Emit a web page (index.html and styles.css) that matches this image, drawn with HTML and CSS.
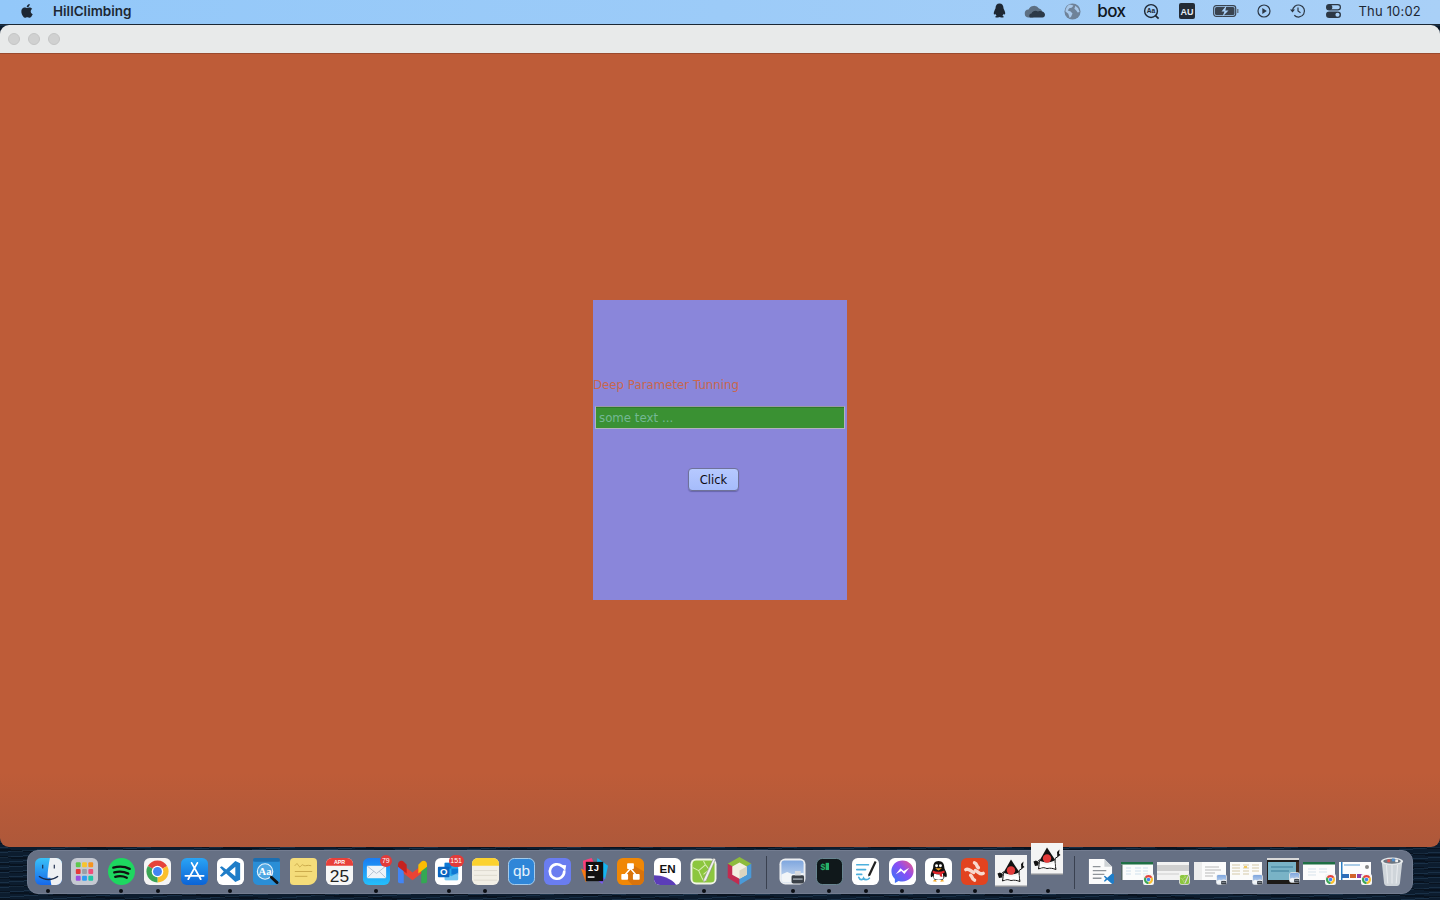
FILE: index.html
```html
<!DOCTYPE html>
<html lang="en">
<head>
<meta charset="utf-8">
<title>HillClimbing</title>
<link rel="stylesheet" href="styles.css">
</head>
<body>
<svg class="defs" width="0" height="0" aria-hidden="true">
  <defs>
    <linearGradient id="gBlue" x1="0" y1="0" x2="0" y2="1"><stop offset="0" stop-color="#2aa4f4"/><stop offset="1" stop-color="#0b63d6"/></linearGradient>
    <linearGradient id="gMail" x1="0" y1="0" x2="0" y2="1"><stop offset="0" stop-color="#1b7cf2"/><stop offset="1" stop-color="#25c0fb"/></linearGradient>
    <linearGradient id="gFinder" x1="0" y1="0" x2="0" y2="1"><stop offset="0" stop-color="#39c2f8"/><stop offset="1" stop-color="#1768ea"/></linearGradient>
    <linearGradient id="gMsg" x1="0" y1="1" x2="1" y2="0"><stop offset="0" stop-color="#2b7cf6"/><stop offset=".55" stop-color="#8a4df5"/><stop offset="1" stop-color="#f4587e"/></linearGradient>
    <linearGradient id="gSky" x1="0" y1="0" x2="0" y2="1"><stop offset="0" stop-color="#7fa6de"/><stop offset="1" stop-color="#cfdff2"/></linearGradient>
    <symbol id="chrome" viewBox="0 0 28 28">
      <path fill="#e5433a" d="M14 14L4 8.300A11.500 11.500 0 0 1 24 8.300Z"/>
      <path fill="#fbc02d" d="M14 14L24 8.300A11.500 11.500 0 0 1 14 25.500Z"/>
      <path fill="#3aa655" d="M14 14L14 25.500A11.500 11.500 0 0 1 4 8.300Z"/>
      <circle cx="14" cy="14" r="6" fill="#fff"/><circle cx="14" cy="14" r="4.600" fill="#4285f4"/>
    </symbol>
    <symbol id="preview" viewBox="0 0 28 28">
      <rect x=".5" y=".5" width="27" height="27" rx="6" fill="#eceef1"/>
      <rect x="2.500" y="2.500" width="23" height="23" rx="3" fill="url(#gSky)"/>
      <path fill="#f2f5f8" d="M2.500 17l6-2.500 5 2 12-1v6.500a3 3 0 0 1-3 3h-17a3 3 0 0 1-3-3z"/>
      <path fill="#3a4048" d="M13 19.500q0-1.500 2-1.500h9q2 0 2 1.500V25q0 1.500-2 1.500h-9q-2 0-2-1.500z"/>
      <path fill="#d8dbdf" d="M16.500 13.500h6v4.500h-6z"/>
      <path fill="#8f979f" d="M14.500 21h10v1.800h-10z"/>
    </symbol>
    <symbol id="texpen" viewBox="0 0 28 28">
      <rect x=".5" y=".5" width="27" height="27" rx="6" fill="#f1f5e6"/>
      <rect x="2.500" y="2.500" width="23" height="23" rx="4" fill="#8cc63f"/>
      <path stroke="#d7ecb0" stroke-width="1.100" fill="none" d="M3 10l6 3 3 7 3 5M9 13l7-6 4 5-6 5M16 7l-2-4"/>
      <path fill="#f0f0f0" stroke="#777" stroke-width=".5" d="M24.500 0l2 1.300L17 23l-2.500 2-.3-3.100z"/>
    </symbol>
    <symbol id="duke" viewBox="0 0 32 32">
      <rect width="32" height="32" fill="#f4f4f4"/>
      <rect y="30.500" width="32" height="1.500" fill="#8d9096"/>
      <path fill="none" stroke="#111" stroke-width="1" d="M8.500 16.500C6 19 6 21 3.500 19.500M24 15.500l3-2 .5-4M9 17c-1 3-1 6-1.500 9 4-2 6-1.500 8.500-.5 3-1 6 0 9 1-1-4-1-8-.8-11"/>
      <path fill="#111" d="M16 4.500L24.200 17c-4 3-12 3-15.600.500z"/>
      <path fill="#111" d="M2.500 18.500l2.500-1 3 2-1 3-3 .5zM26 9l2.500-2.500-.5 4 1.500 1.500-3 2z"/>
      <circle cx="16" cy="15.500" r="4.200" fill="#e33b3b"/>
      <path fill="#fff" d="M9.500 20c4 2.500 10 2.500 14-.5l.5 5.500c-3-.8-5.500-1.200-8-.2-2.500-1-4.500-1-7 .2z"/>
    </symbol>
  </defs>
</svg>

<div class="screen">
  <header class="menubar">
    <div class="menu-left">
      <svg class="apple" viewBox="0 0 14 16" width="14" height="16"><path fill="#1d2733" d="M10.700 8.500c0-1.800 1.500-2.600 1.500-2.700-.8-1.200-2.100-1.400-2.500-1.400-1.100-.1-2.100.6-2.600.6s-1.400-.6-2.300-.6c-1.200 0-2.300.7-2.900 1.700-1.200 2.100-.3 5.300.9 7 .6.800 1.300 1.800 2.200 1.700.9 0 1.200-.6 2.300-.6s1.400.6 2.300.6 1.600-.8 2.100-1.700c.7-1 1-1.900 1-2-.1 0-2-.7-2-2.600zM9 3.300c.5-.6.800-1.400.7-2.300-.7 0-1.600.5-2.100 1.100-.5.500-.9 1.400-.8 2.200.8.100 1.700-.4 2.200-1z"/></svg>
      <span class="app-name">HillClimbing</span>
    </div>
    <div class="menu-right">
      <div class="status-icons">
        <span class="cell"><svg viewBox="0 0 16 18" width="15" height="18"><path fill="#1d2733" d="M8 1c2.800 0 4.200 2.200 4.200 4.600 0 1.100.6 1.800 1.200 3 .8 1.700 1 3.600.2 4-.4.200-.9-.3-1.200-.8-.2 1-.7 1.700-1.400 2.300 1 .4 1.600.8 1.500 1.300-.1.500-1.700.6-3 .5-1 0-1.400-.4-1.500-.4s-.5.400-1.500.4c-1.300.1-2.900 0-3-.5-.1-.5.500-.9 1.500-1.300-.7-.6-1.200-1.300-1.400-2.300-.3.500-.8 1-1.200.8-.8-.4-.6-2.300.2-4 .6-1.200 1.200-1.900 1.200-3C3.800 3.200 5.200 1 8 1z"/></svg></span>
        <span class="cell"><svg viewBox="0 0 22 13" width="22" height="13"><path fill="#5d6f82" d="M5 12.500a4 4 0 0 1-.5-8A6 6 0 0 1 15 3.500a4.500 4.500 0 0 1 3 2.200L9 12.500z"/><path fill="#2c3947" d="M6 12.500c-1.500-1.500-.5-4 1.500-4 1-2.500 4-3.500 6.500-2 3-1.500 7 .5 7 3.300 0 1.500-1 2.700-2.500 2.700z"/></svg></span>
        <span class="cell"><svg viewBox="0 0 18 18" width="17" height="17"><circle cx="9" cy="9" r="8.500" fill="#6f8298"/><path fill="#a8c8ea" d="M6 1.500c1.500.5 3 .5 4 1.500L8 5 5.500 5.500 4 8l3 1 2 2-1.500 3.500L6 16 4.500 11.500 1.500 9C1.500 5.500 3.500 2.500 6 1.500zM12 3l3 2.500 1.500 4-2 .5-1.500-2L11 6z"/></svg></span>
        <span class="cell"><span class="box-text">box</span></span>
        <span class="cell"><svg viewBox="0 0 18 18" width="17" height="17"><circle cx="8.500" cy="8.500" r="6.800" fill="none" stroke="#1d2733" stroke-width="1.500"/><path stroke="#1d2733" stroke-width="1.800" d="M13 13l3.500 3.500"/><text class="aa-text" x="8.500" y="11" text-anchor="middle">Aa</text></svg></span>
        <span class="cell"><svg viewBox="0 0 16 16" width="16" height="16"><rect width="16" height="16" rx="2" fill="#222b36"/><text class="au-text" x="8" y="11.500" text-anchor="middle">AU</text></svg></span>
        <span class="cell"><svg viewBox="0 0 26 12" width="26" height="12"><rect x=".7" y=".7" width="22" height="10.600" rx="2.500" fill="none" stroke="#39434f" stroke-width="1.200"/><rect x="2" y="2" width="19.500" height="8" rx="1.500" fill="#39434f"/><rect x="24" y="4" width="1.500" height="4" fill="#6e7c8c"/><path fill="#a9d0f7" d="M13.500 .5l-5 6h3L9.500 11.500l6-6h-3.200z"/></svg></span>
        <span class="cell"><svg viewBox="0 0 14 14" width="14" height="14"><circle cx="7" cy="7" r="6" fill="none" stroke="#2c3744" stroke-width="1.200"/><path fill="#2c3744" d="M5.300 4l4.500 3-4.500 3z"/></svg></span>
        <span class="cell"><svg viewBox="0 0 16 16" width="16" height="16"><path fill="none" stroke="#2c3744" stroke-width="1.200" d="M2.500 8a6 6 0 1 1 1.800 4.300M8 4.500V8l2.500 1.800"/><path fill="#2c3744" d="M0 6.500h5L2.500 9.500z"/></svg></span>
        <span class="cell"><svg viewBox="0 0 15 14" width="15" height="14"><rect x=".6" y=".6" width="13.800" height="5.300" rx="2.650" fill="none" stroke="#2c3744" stroke-width="1.200"/><circle cx="3.600" cy="3.250" r="2.700" fill="#2c3744"/><rect y="7.500" width="15" height="6.500" rx="3.250" fill="#2c3744"/><circle cx="11.500" cy="10.750" r="2.100" fill="#a9d0f7"/></svg></span>
      </div>
      <span class="clock">Thu 10:02</span>
    </div>
  </header>

  <main class="window">
    <div class="titlebar">
      <span class="light"></span><span class="light"></span><span class="light"></span>
    </div>
    <div class="content">
      <section class="panel">
        <div class="panel-title">Deep Parameter Tunning</div>
        <div class="field">some text ...</div>
        <div class="button-row"><button class="click-button" type="button">Click</button></div>
      </section>
    </div>
  </main>

  <footer class="desk">
    <nav class="dock">
      <div class="item on"><svg viewBox="0 0 28 28"><rect width="28" height="28" rx="6" fill="url(#gFinder)"/><path fill="#eef0f3" d="M15.500 0H22a6 6 0 0 1 6 6v16a6 6 0 0 1-6 6h-5c-.6-3-1-5.500-1-7.500h-3c0-6 1-13 2.500-20.500z"/><path fill="none" stroke="#1b2b4a" stroke-width="1.200" d="M8 7v4M20 7v4M4 19c6 4.500 14 4.500 20 0"/></svg></div>
      <div class="item"><svg viewBox="0 0 28 28"><rect width="28" height="28" rx="6" fill="#c5c9d2"/><g><rect x="5" y="4.500" width="5" height="5" rx="1" fill="#5fc84d"/><rect x="11.500" y="4.500" width="5" height="5" rx="1" fill="#f8c42d"/><rect x="18" y="4.500" width="5" height="5" rx="1" fill="#f59420"/><rect x="5" y="11.500" width="5" height="5" rx="1" fill="#e43a3a"/><rect x="11.500" y="11.500" width="5" height="5" rx="1" fill="#9aa0a6"/><rect x="18" y="11.500" width="5" height="5" rx="1" fill="#ef4f7a"/><rect x="5" y="18.500" width="5" height="5" rx="1" fill="#9a4fe0"/><rect x="11.500" y="18.500" width="5" height="5" rx="1" fill="#2e9cf2"/><rect x="18" y="18.500" width="5" height="5" rx="1" fill="#1fc9a5"/></g></svg></div>
      <div class="item on"><svg viewBox="0 0 28 28"><circle cx="14" cy="14" r="14" fill="#1ed760"/><path fill="none" stroke="#111" stroke-linecap="round" stroke-width="2.400" d="M5.500 10c6-1.800 12-1.300 17 1.300M6.500 15c5-1.400 10-1 14.500 1.200M7.500 19.500c4-1 8.500-.8 12 1"/></svg></div>
      <div class="item on"><svg viewBox="0 0 28 28"><rect width="28" height="28" rx="6" fill="#f4f4f4"/><use href="#chrome" width="28" height="28"/></svg></div>
      <div class="item"><svg viewBox="0 0 28 28"><rect width="28" height="28" rx="6" fill="url(#gBlue)"/><path fill="none" stroke="#fff" stroke-linecap="round" stroke-width="1.800" d="M11 5l9.500 17M17 5L7.500 22M4.500 18.500h19"/></svg></div>
      <div class="item on"><svg viewBox="0 0 28 28"><rect width="28" height="28" rx="6" fill="#fff"/><path fill="#1f7dc8" d="M19 3l5 2.500v17L19 25 9.500 16l-4.500 3.500-2-1.200 4-4.300-4-4.300 2-1.200L9.500 12zM19 9l-6 5 6 5z"/></svg></div>
      <div class="item"><svg viewBox="0 0 28 28"><rect width="28" height="28" rx="5" fill="#2a8ed6"/><rect width="28" height="4" rx="2" fill="#1c6eb0"/><circle cx="12.500" cy="14" r="8" fill="#4ea6e2" stroke="#e2f1fb" stroke-width="1.200"/><text class="dict-text" x="12.500" y="18" text-anchor="middle">Aa</text><path stroke="#111" stroke-width="3" stroke-linecap="round" d="M19 20l6 5.500"/></svg></div>
      <div class="item"><svg viewBox="0 0 28 28"><path fill="#f4dc7a" d="M4 0h20a4 4 0 0 1 4 4v15c0 5-4 9-9 9H4a4 4 0 0 1-4-4V4a4 4 0 0 1 4-4z"/><path fill="none" stroke="#c9a94a" stroke-width="1" d="M5 8c2-3 3-2 4 0s2 1 3-.5 2 1 4 .5 4-.5 6 0M5 14h18M5 19h13"/></svg></div>
      <div class="item"><svg viewBox="0 0 28 28"><rect width="28" height="28" rx="6" fill="#f6f6f6"/><path fill="#e8403a" d="M0 8V6a6 6 0 0 1 6-6h16a6 6 0 0 1 6 6v2z"/><text class="apr-text" x="14" y="6.500" text-anchor="middle">APR</text><text class="cal-text" x="14" y="25" text-anchor="middle">25</text></svg></div>
      <div class="item on"><svg viewBox="0 0 28 28"><rect width="28" height="28" rx="6" fill="url(#gMail)"/><rect x="4" y="8" width="20" height="13" rx="1" fill="#eef3f8"/><path fill="none" stroke="#b4c2d0" stroke-width="1" d="M4.500 8.500L14 16l9.500-7.500M4.500 20.500l7-7M23.500 20.500l-7-7"/></svg><span class="badge">79</span></div>
      <div class="item"><svg viewBox="0 0 32 28" class="wide"><path fill="#4285f4" d="M1 8h6v18H3a2 2 0 0 1-2-2z"/><path fill="#34a853" d="M25 8h6v16a2 2 0 0 1-2 2h-4z"/><path fill="#ea4335" d="M7 8v8l9 7 9-7V8l-9 7z"/><path fill="#c5221f" d="M1 7c0-4 4-5 6-3l3 3v9L1 9z"/><path fill="#fbbc04" d="M31 7c0-4-4-5-6-3l-3 3v9l9-7z"/></svg></div>
      <div class="item on"><svg viewBox="0 0 28 28"><rect width="28" height="28" rx="6" fill="#fff"/><rect x="10" y="5" width="14" height="18" rx="1" fill="#28a8ea"/><rect x="10" y="5" width="7" height="6" fill="#0f78d4"/><rect x="17" y="11" width="7" height="6" fill="#0f78d4"/><path fill="#fff" opacity=".35" d="M10 15l7 4 7-4v8H10z"/><rect x="3" y="9" width="12" height="11" rx="1" fill="#0a64c0"/><text class="ol-text" x="9" y="18" text-anchor="middle">O</text></svg><span class="badge badge-wide">151</span></div>
      <div class="item on"><svg viewBox="0 0 28 28"><rect width="28" height="28" rx="6" fill="#f2efe6"/><path fill="#fcd22e" d="M0 8V6a6 6 0 0 1 6-6h16a6 6 0 0 1 6 6v2z"/><path stroke="#d8d4c8" stroke-width=".8" d="M2 13h24M2 18h24M2 23h24"/></svg></div>
      <div class="item"><svg viewBox="0 0 28 28"><rect x=".5" y=".5" width="27" height="27" rx="6" fill="#2f86d8" stroke="#a9d0f0"/><text class="qb-text" x="14" y="19" text-anchor="middle">qb</text></svg></div>
      <div class="item"><svg viewBox="0 0 28 28"><rect width="28" height="28" rx="6" fill="#6a7df0"/><path fill="none" stroke="#fff" stroke-width="2.800" stroke-linecap="round" d="M21 14a7.500 7.500 0 1 1-2.500-5.600"/><path fill="#fff" d="M16 7l7 .5-1 6z"/></svg></div>
      <div class="item"><svg viewBox="0 0 30 30" class="wide"><path fill="#fc3f7a" d="M3 4l9-3 4 8-12 7z"/><path fill="#f97a12" d="M1 12l5 14 7-8z"/><path fill="#15b4f0" d="M18 1l11 8-3 14-10-4z"/><path fill="#7b5cf0" d="M18 24l8-3-3 7z"/><rect x="6" y="5" width="18" height="20" fill="#111"/><text class="ij-text" x="8" y="14.500">IJ</text><rect x="8" y="20" width="7" height="1.500" fill="#fff"/></svg></div>
      <div class="item"><svg viewBox="0 0 28 28"><rect width="28" height="28" rx="6" fill="#f08705"/><path fill="#d9730a" d="M28 14v8a6 6 0 0 1-6 6h-6L8 20l6-14z"/><path fill="none" stroke="#fff" stroke-width="1.600" d="M14 11l-6 7M14 11l6 7"/><rect x="10.500" y="5.500" width="7" height="6" rx=".8" fill="#fff"/><rect x="4.500" y="16.500" width="7" height="6" rx=".8" fill="#fff"/><rect x="16.500" y="16.500" width="7" height="6" rx=".8" fill="#fff"/></svg></div>
      <div class="item"><svg viewBox="0 0 28 28"><rect width="28" height="28" rx="6" fill="#fff"/><path fill="#5b3db8" d="M0 18c8 0 18 3 23 10H6a6 6 0 0 1-6-6z"/><text class="en-text" x="14" y="15.500" text-anchor="middle">EN</text></svg></div>
      <div class="item on"><svg viewBox="0 0 28 28"><use href="#texpen" width="28" height="28"/></svg></div>
      <div class="item"><svg viewBox="0 0 30 32" class="wide"><path fill="#8dbb3c" d="M15 0L2 7.500l13 7.500 13-7.500z"/><path fill="#c22b4f" d="M2 7.500V23l13 8V15z"/><path fill="#4a9ad8" d="M28 7.500V23l-13 8V15z"/><path fill="#f3efe0" d="M15 6l8 4.500v9L15 24l-8-4.500v-9z"/><path fill="#d9d4bf" d="M15 15l8-4.500v9L15 24z"/></svg></div>
      <div class="sep"></div>
      <div class="item on"><svg viewBox="0 0 28 28"><use href="#preview" width="28" height="28"/></svg></div>
      <div class="item on"><svg viewBox="0 0 28 28"><rect x=".5" y=".5" width="27" height="27" rx="6" fill="#10181b" stroke="#6b8a95"/><text class="term-text" x="4.500" y="12">$</text><rect x="10" y="5" width="3.500" height="7.500" fill="#26b36b"/></svg></div>
      <div class="item on"><svg viewBox="0 0 28 28"><rect width="28" height="28" rx="6" fill="#fff"/><path fill="none" stroke="#4db0dd" stroke-width="1.800" stroke-linecap="round" d="M5 7h12M5 12h9M5 17h5M7 20c1 3 4 3 5 1 1 2 4 2 6 0"/><path fill="#222" d="M23.500 3l2 1.200-6.500 14-2.200 1 .2-2.400z"/></svg></div>
      <div class="item on"><svg viewBox="0 0 28 28"><rect width="28" height="28" rx="6" fill="#fff"/><path fill="url(#gMsg)" d="M14 2.500C7.400 2.500 2.500 7.400 2.500 13.600c0 3.300 1.400 6.200 3.600 8.200V26l3.900-2.200c1.300.4 2.600.6 4 .6 6.600 0 11.500-4.900 11.500-10.800S20.600 2.500 14 2.500z"/><path fill="#fff" d="M7 16.800l4.900-6.300 3.300 2.900 5.800-3.200-5 6.400-3.200-3z"/></svg></div>
      <div class="item on"><svg viewBox="0 0 28 28"><rect width="28" height="28" rx="6" fill="#fff"/><path fill="#111" d="M14 3c4 0 6 3 6 6.500 0 2 2 4 2.500 7 .4 3-.5 4-1.500 3l-.5-1c-.3 2-1 3-2 4H10c-1-1-1.700-2-2-4l-.5 1c-1 1-1.900 0-1.500-3 .5-3 2.500-5 2.500-7C8.500 6 10 3 14 3z"/><path fill="#fff" d="M9.500 16c3 1.500 6 1.500 9 0l.7 5c-3 2-7 2-10.400 0z"/><circle cx="12" cy="8" r="1.500" fill="#fff"/><circle cx="16" cy="8" r="1.500" fill="#fff"/><path fill="#f5a623" d="M10.500 10.500h7L14 13z"/><path fill="#e0242a" d="M8 13c4 1.800 8 1.800 12 0l.5 2c-1 .7-2 1-3 1.300l.5 3.500-2.500-1-.5-2.200c-2.500.3-4.500 0-7-1.100z"/><path fill="#f5a623" d="M8 24c2-2 4-1 4 .5zM20 24c-2-2-4-1-4 .5z"/></svg></div>
      <div class="item on"><svg viewBox="0 0 28 28"><rect width="28" height="28" rx="6" fill="#e2431f"/><path fill="none" stroke="#f8d9cd" stroke-width="3.600" stroke-linecap="round" d="M5 12c3-2 5 2 8 3M23 16c-3 2-5-2-8-3M14 5c3 1 2 4 4 5M14 23c-3-1-2-4-4-5"/></svg></div>
      <div class="item on"><svg class="duke-tile" viewBox="0 0 32 32"><use href="#duke" width="32" height="32"/></svg></div>
      <div class="item on"><svg class="duke-tile bounced" viewBox="0 0 32 32"><use href="#duke" width="32" height="32"/></svg></div>
      <div class="sep"></div>
      <div class="item"><svg viewBox="0 0 28 28"><path fill="#fbfbfb" d="M2 1h16l8 8v18H2z"/><path fill="#cfd3d6" d="M18 1l8 8h-8z"/><path stroke="#8f9499" stroke-width="1.300" d="M6 9h8M6 13h14M6 17h12M6 21h9"/><path fill="#1f7dc8" d="M26 16l2 1v9l-2 1-5-4.500-2.500 2-1-.7 2-2.300-2-2.300 1-.7 2.500 2z"/></svg></div>
      <div class="item"><div class="thumb"><svg viewBox="0 0 32 18" preserveAspectRatio="none"><rect width="32" height="18" fill="#fbfcfb"/><rect width="32" height="2.500" fill="#1e6f43"/><path stroke="#cfe0ec" stroke-width="1" d="M5 6h5M5 9h5M5 12h5M14 6h6M14 9h6M14 12h6M22 6h5M22 9h5M22 12h5"/><rect y="2.500" width="1.500" height="15.500" fill="#566"/></svg><svg class="mini" viewBox="0 0 28 28"><rect width="28" height="28" rx="5" fill="#f4f4f4"/><use href="#chrome" width="28" height="28"/></svg></div></div>
      <div class="item"><div class="thumb"><svg viewBox="0 0 32 18" preserveAspectRatio="none"><rect width="32" height="18" fill="#f2f2f2"/><rect y="3" width="32" height="6" fill="#cfcfcf"/><rect y="11" width="22" height="2" fill="#e0e0e0"/></svg><svg class="mini" viewBox="0 0 28 28"><use href="#texpen" width="28" height="28"/></svg></div></div>
      <div class="item"><div class="thumb"><svg viewBox="0 0 32 18" preserveAspectRatio="none"><rect width="32" height="18" fill="#fbfbfb"/><rect width="8" height="18" fill="#ececec"/><path stroke="#aaa" stroke-width=".8" d="M11 5h14M11 8h16M11 11h10M11 14h8"/></svg><svg class="mini" viewBox="0 0 28 28"><use href="#preview" width="28" height="28"/></svg></div></div>
      <div class="item"><div class="thumb"><svg viewBox="0 0 32 18" preserveAspectRatio="none"><rect width="32" height="18" fill="#fbfbfa"/><path stroke="#d5c9a8" stroke-width="1" d="M2 3h8M2 6h8M2 9h8M2 12h8M13 3h6M13 6h6M13 9h6M13 12h6M22 3h7M22 6h7M22 9h7"/><rect x="14" y="4" width="3" height="2" fill="#f3c95f"/></svg><svg class="mini" viewBox="0 0 28 28"><use href="#preview" width="28" height="28"/></svg></div></div>
      <div class="item"><div class="thumb thumb-tall"><svg viewBox="0 0 32 26" preserveAspectRatio="none"><rect width="32" height="26" fill="#1d1a17"/><rect width="32" height="2" fill="#d9d9d9"/><rect x="1" y="4" width="28" height="18" fill="#79b3c6"/><path stroke="#3f7f99" stroke-width="1" d="M4 9h22M4 13h18"/><rect x="29" y="4" width="3" height="18" fill="#3a2a20"/></svg><svg class="mini" viewBox="0 0 28 28"><use href="#preview" width="28" height="28"/></svg></div></div>
      <div class="item"><div class="thumb"><svg viewBox="0 0 32 18" preserveAspectRatio="none"><rect width="32" height="18" fill="#fcfcfc"/><rect width="32" height="2.500" fill="#1e6f43"/><path stroke="#d7e3ec" stroke-width="1" d="M5 7h8M5 10h8M5 13h8M16 7h8M16 10h8"/></svg><svg class="mini" viewBox="0 0 28 28"><rect width="28" height="28" rx="5" fill="#f4f4f4"/><use href="#chrome" width="28" height="28"/></svg></div></div>
      <div class="item"><div class="thumb"><svg viewBox="0 0 32 18" preserveAspectRatio="none"><rect width="32" height="18" fill="#fcfcfc"/><rect x="2" width="1.500" height="18" fill="#2b7fc4"/><path stroke="#5a9bd0" stroke-width="1" d="M5 3h16"/><rect x="3" y="12" width="7" height="4" fill="#2e6db8"/><rect x="11" y="12" width="6" height="4" fill="#d2642c"/><rect x="18" y="12" width="6" height="4" fill="#8e3fa8"/><circle cx="28" cy="5" r="2" fill="#888"/></svg><svg class="mini" viewBox="0 0 28 28"><rect width="28" height="28" rx="5" fill="#f4f4f4"/><use href="#chrome" width="28" height="28"/></svg></div></div>
      <div class="item"><svg class="trash" viewBox="0 0 28 32"><path fill="#cfd5da" d="M3 6h22l-2.500 23a3 3 0 0 1-3 2.500h-11a3 3 0 0 1-3-2.500z"/><path fill="none" stroke="#eef1f3" stroke-width=".9" d="M8 9l1.500 20M14 9v20M20 9l-1.500 20"/><ellipse cx="14" cy="5" rx="12" ry="4" fill="#e7eaec"/><ellipse cx="14" cy="5" rx="9.500" ry="2.600" fill="#6c7680"/><path fill="#d9534f" d="M9 3h3v3H9z"/><path fill="#4f8fd0" d="M14 2h3v3h-3z"/><path fill="#f1f1f1" d="M17.500 3h3v3h-3z"/></svg></div>
    </nav>
  </footer>
</div>
</body>
</html>
```

FILE: styles.css
```css
* { box-sizing: border-box; }

html, body {
  margin: 0;
  padding: 0;
  width: 1440px;
  height: 900px;
  overflow: hidden;
}

.defs { display: block; height: 0; width: 0; }

.screen {
  width: 1440px;
  height: 900px;
  display: flex;
  flex-direction: column;
  overflow: hidden;
  background-color: #0c1c2e;
  background-image:
    repeating-linear-gradient(176deg, rgba(60, 100, 135, .28) 0 1px, transparent 1px 5px),
    repeating-linear-gradient(3deg, rgba(5, 12, 22, .6) 0 2px, transparent 2px 7px);
}

/* Menu bar */
.menubar {
  flex: none;
  height: 25px;
  display: flex;
  justify-content: space-between;
  align-items: center;
  padding: 0 19px 2px 20px;
  background: linear-gradient(90deg, #93c8f9 0%, #9ccbf8 50%, #a9d0f7 100%);
  border-bottom: 1px solid #1b2835;
  font-family: Inter, "Liberation Sans", sans-serif;
  font-size: 13px;
  color: #1d2733;
}

.menu-left { display: flex; align-items: center; gap: 19px; }
.apple { display: block; }
.app-name { font-weight: 600; font-size: 13.500px; }

.menu-right { display: flex; align-items: center; gap: 9px; }
.status-icons {
  display: grid;
  grid-template-columns: 36px 36px 38px 40px 40px 32px 46px 30px 38px 32px;
  align-items: center;
  justify-items: center;
}
.cell { display: flex; align-items: center; justify-content: center; height: 20px; }
.cell svg { display: block; }
.clock { letter-spacing: .2px; }

.box-text {
  padding-top: 1px;
  font-weight: 500;
  font-size: 17px;
  line-height: 19px;
  letter-spacing: -.6px;
  color: #10161d;
}
.aa-text { font: 700 7px "Liberation Sans", sans-serif; fill: #1d2733; }
.au-text { font: 700 9px "Liberation Sans", sans-serif; fill: #e6edf4; }

/* Window */
.window {
  flex: none;
  height: 822px;
  display: flex;
  flex-direction: column;
  border-radius: 9px;
  overflow: hidden;
}

.titlebar {
  flex: none;
  height: 28px;
  display: flex;
  align-items: center;
  gap: 8px;
  padding-left: 8px;
  background: #e8eaea;
}

.light {
  width: 12px;
  height: 12px;
  border-radius: 50%;
  background: #d0d1d1;
  border: 1px solid #c4c5c5;
}

.content {
  flex: 1;
  display: flex;
  align-items: center;
  justify-content: center;
  background: linear-gradient(180deg, #be5c38 0, #be5c38 720px, #ae583a 100%);
  box-shadow: inset 0 1px 0 #9a4a2e;
}

.panel {
  width: 254px;
  height: 300px;
  background: #8a86da;
  padding-top: 78px;
  display: flex;
  flex-direction: column;
  font-family: "DejaVu Sans", sans-serif;
  font-size: 11.800px;
}

.panel-title {
  height: 14px;
  line-height: 14px;
  color: #c9664e;
  white-space: nowrap;
}

.field {
  margin: 14px 2px 0;
  height: 23px;
  line-height: 22px;
  padding-left: 3px;
  background: #3a9133;
  border: 1px solid #b3b3bd;
  border-top-color: #9a9aa6;
  box-shadow: inset 0 1px 0 #2f7a2b;
  color: #74b894;
  white-space: nowrap;
}

.button-row { margin: 39px 0 0 95px; }

.click-button {
  display: block;
  width: 51px;
  height: 23px;
  padding: 0;
  border: 1px solid #6f7299;
  border-radius: 4px;
  background: linear-gradient(180deg, #b6c9ff 0%, #a6bcfb 100%);
  box-shadow: 0 1px 1px rgba(40, 40, 90, .35);
  color: #0b0b12;
  font-family: "DejaVu Sans", sans-serif;
  font-size: 11.500px;
}

/* Dock */
.desk {
  flex: none;
  height: 53px;
  padding: 3px 27px 0;
}

.dock {
  width: 1386px;
  height: 44px;
  display: flex;
  align-items: center;
  padding-left: 2.300px;
  background: #667084;
  border: 1px solid #737c90;
  border-radius: 11px;
}

.item {
  position: relative;
  flex: none;
  width: 36.400px;
  height: 44px;
  padding-bottom: 2px;
  display: flex;
  align-items: center;
  justify-content: center;
}

.item > svg { display: block; width: 27px; height: 27px; }
.item > svg.wide { width: 31px; height: 29px; }

.item.on::after {
  content: "";
  position: absolute;
  left: 50%;
  bottom: 1px;
  width: 4px;
  height: 4px;
  margin-left: -2px;
  border-radius: 50%;
  background: #0b0e14;
}

.sep {
  flex: none;
  width: 16.600px;
  height: 100%;
  display: flex;
  justify-content: center;
  align-items: center;
}

.sep::before {
  content: "";
  width: 1px;
  height: 33px;
  background: #3a4150;
}

.item > svg.duke-tile { width: 32px; height: 32px; }
.item > svg.bounced { position: absolute; left: 2px; top: -7px; }

.item > svg.trash { width: 26px; height: 31px; }

.badge {
  position: absolute;
  top: 5px;
  left: 22px;
  min-width: 12px;
  height: 12px;
  padding: 0 1px;
  border-radius: 6px;
  background: #e23a3a;
  color: #fff;
  font: 7px/12px "Liberation Sans", sans-serif;
  text-align: center;
}
.badge-wide { left: 18px; min-width: 15px; }

.thumb {
  position: relative;
  width: 32px;
  height: 18px;
}
.thumb > svg:first-child { display: block; width: 100%; height: 100%; }
.thumb-tall { height: 26px; }
.mini {
  position: absolute;
  right: -1px;
  bottom: -5px;
  width: 11px;
  height: 11px;
}
.thumb-tall .mini { bottom: 1px; }

/* Icon text */
.dict-text { font: 700 11px "Liberation Serif", serif; fill: #fff; }
.apr-text { font: 700 5.500px "Liberation Sans", sans-serif; fill: #fff; }
.cal-text { font: 400 18px "Liberation Sans", sans-serif; fill: #222; }
.ol-text { font: 700 10px "Liberation Sans", sans-serif; fill: #fff; }
.qb-text { font: 400 16px "Liberation Sans", sans-serif; fill: #e6f2fc; }
.ij-text { font: 700 10px "Liberation Mono", monospace; fill: #fff; }
.en-text { font: 700 12px "Liberation Sans", sans-serif; fill: #111; }
.term-text { font: 700 9px "Liberation Mono", monospace; fill: #26b36b; }
```
